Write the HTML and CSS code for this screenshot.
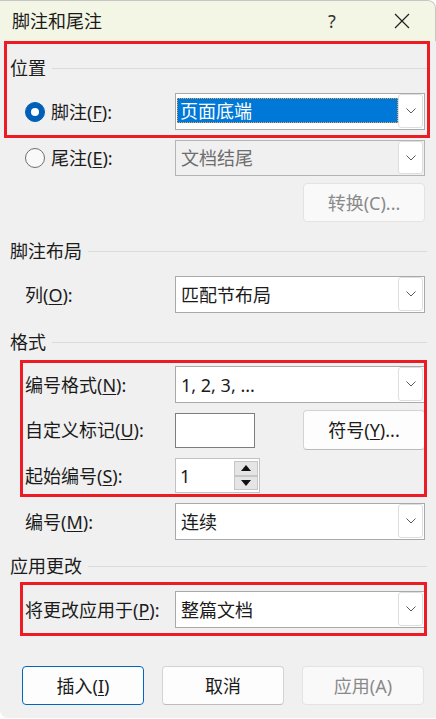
FILE: index.html
```html
<!DOCTYPE html>
<html lang="zh-CN">
<head>
  <meta charset="UTF-8">
  <meta name="viewport" content="width=device-width, initial-scale=1.0">
  <title>脚注和尾注</title>
  <link rel="stylesheet" href="styles.css">
</head>
<body>
  <div class="dialog">
    <!-- Barra de título -->
    <div class="titlebar">
      <span class="title">脚注和尾注</span>
      <span class="caption help">?</span>
      <span class="caption close">
        <svg width="16" height="16" viewBox="0 0 16 16"><path d="M1 1 L15 15 M15 1 L1 15" stroke="#1f1f1f" stroke-width="1.2" fill="none"/></svg>
      </span>
    </div>

    <div class="content">
      <div class="group-head head-pos">位置</div>
      <div class="row row-first">
        <span class="radio checked"></span>
        <span class="label radio-label">脚注(<u>F</u>):</span>
        <div class="combo">
          <span class="value selected">页面底端</span>
          <span class="drop"><svg width="10" height="6" viewBox="0 0 10 6"><path d="M0.5 0.5 L5 5 L9.5 0.5" stroke="#5a5a5a" fill="none"/></svg></span>
        </div>
      </div>
      <div class="row row-second">
        <span class="radio"></span>
        <span class="label radio-label">尾注(<u>E</u>):</span>
        <div class="combo disabled">
          <span class="value">文档结尾</span>
          <span class="drop"><svg width="10" height="6" viewBox="0 0 10 6"><path d="M0.5 0.5 L5 5 L9.5 0.5" stroke="#5a5a5a" fill="none"/></svg></span>
        </div>
      </div>
      <div class="row row-btn">
        <button class="btn disabled push-right">转换(C)...</button>
      </div>

      <div class="group-head head-layout">脚注布局</div>
      <div class="row row-cols">
        <span class="label">列(<u>O</u>):</span>
        <div class="combo">
          <span class="value">匹配节布局</span>
          <span class="drop"><svg width="10" height="6" viewBox="0 0 10 6"><path d="M0.5 0.5 L5 5 L9.5 0.5" stroke="#5a5a5a" fill="none"/></svg></span>
        </div>
      </div>

      <div class="group-head head-format">格式</div>
      <div class="row row-numfmt">
        <span class="label">编号格式(<u>N</u>):</span>
        <div class="combo">
          <span class="value">1, 2, 3, ...</span>
          <span class="drop"><svg width="10" height="6" viewBox="0 0 10 6"><path d="M0.5 0.5 L5 5 L9.5 0.5" stroke="#5a5a5a" fill="none"/></svg></span>
        </div>
      </div>
      <div class="row row-custom">
        <span class="label">自定义标记(<u>U</u>):</span>
        <span class="textbox"></span>
        <button class="btn push-right">符号(<u>Y</u>)...</button>
      </div>
      <div class="row row-start">
        <span class="label">起始编号(<u>S</u>):</span>
        <div class="spin">
          <span class="spin-value">1</span>
          <span class="spin-arrows">
            <span class="arrow"><svg width="10" height="6" viewBox="0 0 10 6"><path d="M5 0 L10 6 L0 6 Z" fill="#111"/></svg></span>
            <span class="arrow"><svg width="10" height="6" viewBox="0 0 10 6"><path d="M0 0 L10 0 L5 6 Z" fill="#111"/></svg></span>
          </span>
        </div>
      </div>
      <div class="row row-numbering">
        <span class="label">编号(<u>M</u>):</span>
        <div class="combo">
          <span class="value">连续</span>
          <span class="drop"><svg width="10" height="6" viewBox="0 0 10 6"><path d="M0.5 0.5 L5 5 L9.5 0.5" stroke="#5a5a5a" fill="none"/></svg></span>
        </div>
      </div>

      <div class="group-head head-apply">应用更改</div>
      <div class="row row-apply">
        <span class="label">将更改应用于(<u>P</u>):</span>
        <div class="combo">
          <span class="value">整篇文档</span>
          <span class="drop"><svg width="10" height="6" viewBox="0 0 10 6"><path d="M0.5 0.5 L5 5 L9.5 0.5" stroke="#5a5a5a" fill="none"/></svg></span>
        </div>
      </div>

      <div class="footer">
        <button class="btn default">插入(<u>I</u>)</button>
        <button class="btn">取消</button>
        <button class="btn disabled">应用(A)</button>
      </div>
    </div>

    <!-- Marcas rojas encima del diálogo -->
    <div class="mark mark-pos"></div>
    <div class="mark mark-format"></div>
    <div class="mark mark-apply"></div>
  </div>
</body>
</html>
```

FILE: styles.css
```css
/* Reset */
html, body {
  margin: 0;
  padding: 0;
}
body {
  font-family: "Noto Sans", "Noto Sans CJK SC", sans-serif;
  font-size: 18px;
  line-height: 24px;
  color: #1b1b1b;
  background: #ffffff;
}
.dialog {
  position: relative;
  width: 436px;
  height: 718px;
  background: #f0f0f0;
  border-top-right-radius: 8px;
  border-bottom-left-radius: 8px;
  box-sizing: border-box;
  overflow: hidden;
}
/* Barra de título */
.titlebar {
  display: flex;
  align-items: center;
  height: 41px;
  background: #f3f6e4;
  border-top: 1px solid #c6c6c6;
  border-right: 1px solid #c6c6c6;
  border-top-right-radius: 8px;
  box-sizing: border-box;
}
.title {
  padding-left: 12px;
  color: #1a1a1a;
}
.caption {
  display: flex;
  justify-content: center;
  align-items: center;
  width: 46px;
  height: 40px;
  color: #333;
}
.help {
  margin-left: auto;
  margin-right: 24px;
}
.close {
  margin-right: 10px;
}
/* Contenido */
.content {
  display: flex;
  flex-direction: column;
  padding: 0 9px 0 10px;
}
.group-head {
  display: flex;
  align-items: center;
  height: 24px;
}
.group-head::after {
  content: "";
  flex: 1;
  height: 1px;
  background: #dadada;
  margin-left: 6px;
}
.head-pos { margin-top: 15px; }
.head-layout { margin-top: 17px; }
.head-format { margin-top: 17px; }
.head-apply { margin-top: 14px; }

.row {
  display: flex;
  align-items: center;
  padding-left: 15px;
  padding-right: 1px;
  height: 37px;
}
.row-first { margin-top: 13px; }
.row-second { margin-top: 10px; height: 36px; }
.row-btn { margin-top: 7px; height: 39px; }
.row-cols { margin-top: 13px; }
.row-numfmt { margin-top: 12px; }
.row-custom { margin-top: 7px; height: 40px; }
.row-start { margin-top: 8px; height: 35px; }
.row-numbering { margin-top: 10px; }
.row-apply { margin-top: 13px; }

.label {
  width: 150px;
  flex-shrink: 0;
}
.radio-label {
  width: 124px;
}
u {
  text-underline-offset: 2px;
}
/* Botones de opción */
.radio {
  width: 18px;
  height: 18px;
  border: 1px solid #6e6e6e;
  border-radius: 50%;
  background: #f9f9f9;
  margin-right: 6px;
  flex-shrink: 0;
  position: relative;
}
.radio.checked {
  background: #005fb8;
  border-color: #005fb8;
}
.radio.checked::after {
  content: "";
  position: absolute;
  left: 5px;
  top: 5px;
  width: 8px;
  height: 8px;
  border-radius: 50%;
  background: #fff;
}
/* Listas desplegables */
.combo {
  display: flex;
  width: 250px;
  height: 100%;
  border: 1px solid #a9a9a9;
  background: #fff;
  box-sizing: border-box;
}
.combo.disabled {
  background: #f0f0f0;
  border-color: #b4b4b4;
  color: #6d6d6d;
}
.value {
  flex: 1;
  display: flex;
  align-items: center;
  padding-left: 5px;
}
.value.selected {
  align-self: center;
  height: 25px;
  margin-left: 1px;
  margin-top: -2px;
  padding-left: 2px;
  background: #0078d7;
  color: #fff;
  border: 1px dotted #e9a252;
  box-sizing: border-box;
}
.drop {
  display: flex;
  justify-content: center;
  align-items: center;
  width: 25px;
  margin: 0 1px 1px 0;
  border: 1px solid #dedede;
  border-radius: 3px;
  background: #fff;
  box-sizing: border-box;
}
/* Campo de texto y número */
.textbox {
  width: 80px;
  height: 35px;
  border: 1px solid #7d7d7d;
  background: #fff;
  box-sizing: border-box;
}
.spin {
  display: flex;
  width: 85px;
  height: 35px;
  border: 1px solid #c2c2c2;
  background: #fff;
  box-sizing: border-box;
}
.spin-value {
  flex: 1;
  padding-left: 4px;
  display: flex;
  align-items: center;
}
.spin-arrows {
  display: flex;
  flex-direction: column;
  width: 24px;
  margin: 2px 1px 2px 0;
}
.arrow {
  flex: 1;
  display: flex;
  justify-content: center;
  align-items: center;
  background: #e5e5e5;
  border: 1px solid #c6c6c6;
}
/* Botones */
.btn {
  width: 122px;
  height: 39px;
  font: inherit;
  color: #1b1b1b;
  background: #fdfdfd;
  border: 1px solid #d3d3d3;
  border-bottom-color: #bcbcbc;
  border-radius: 4px;
  padding: 0;
  flex-shrink: 0;
}
.btn.default {
  border-color: #0067c0;
}
.btn.disabled {
  background: #f9f9f9;
  border-color: #e3e3e3;
  color: #8a8a8a;
}
.push-right {
  margin-left: auto;
  margin-right: 1px;
}
.row-custom .btn {
  height: 40px;
}
.footer {
  display: flex;
  gap: 18px;
  margin-top: 38px;
  padding-left: 12px;
}
/* Marcas rojas */
.mark {
  position: absolute;
  border: 3px solid #ed1c24;
  box-sizing: border-box;
}
.mark-pos {
  left: 4px;
  top: 41px;
  width: 426px;
  height: 97px;
}
.mark-format {
  left: 20px;
  top: 360px;
  width: 407px;
  height: 137px;
}
.mark-apply {
  left: 20px;
  top: 582px;
  width: 407px;
  height: 54px;
}
```
